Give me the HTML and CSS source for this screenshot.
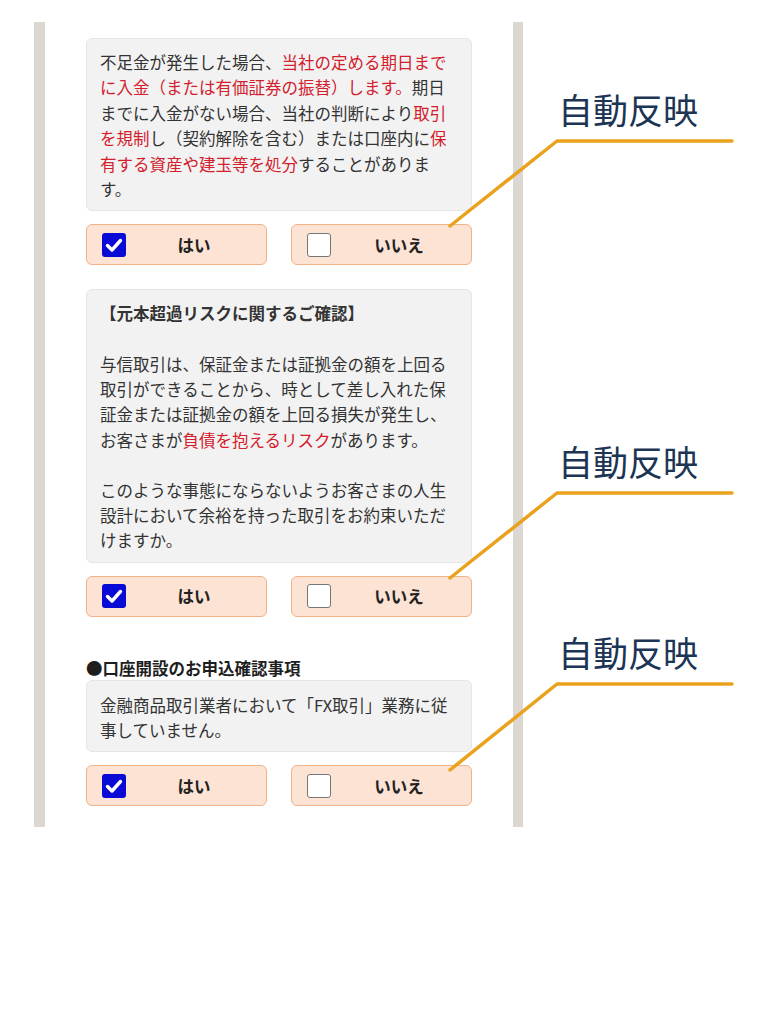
FILE: index.html
```html
<!DOCTYPE html>
<html lang="ja">
<head>
<meta charset="utf-8">
<title>確認事項</title>
<link rel="stylesheet" href="styles.css">
</head>
<body>
<div class="canvas">
  <div class="phone">
    <div class="screen">
      <div class="note">不足金が発生した場合、<span class="red">当社の定める期日までに入金（または有価証券の振替）します。</span>期日までに入金がない場合、当社の判断により<span class="red">取引を規制</span>し（契約解除を含む）または口座内に<span class="red">保有する資産や建玉等を処分</span>することがあります。</div>
      <div class="choices">
        <div class="choice"><span class="box checked"><svg viewBox="0 0 24 24" width="24" height="24"><path d="M5.5 12.5 L10 17 L18.5 7.5" fill="none" stroke="#fff" stroke-width="3.4" stroke-linecap="round" stroke-linejoin="round"/></svg></span><span class="label">はい</span></div>
        <div class="choice"><span class="box"></span><span class="label">いいえ</span></div>
      </div>

      <div class="note second">
        <p class="title">【元本超過リスクに関するご確認】</p>
        <p class="para">与信取引は、保証金または証拠金の額を上回る取引ができることから、時として差し入れた保証金または証拠金の額を上回る損失が発生し、お客さまが<span class="red">負債を抱えるリスク</span>があります。</p>
        <p class="para">このような事態にならないようお客さまの人生設計において余裕を持った取引をお約束いただけますか。</p>
      </div>
      <div class="choices">
        <div class="choice"><span class="box checked"><svg viewBox="0 0 24 24" width="24" height="24"><path d="M5.5 12.5 L10 17 L18.5 7.5" fill="none" stroke="#fff" stroke-width="3.4" stroke-linecap="round" stroke-linejoin="round"/></svg></span><span class="label">はい</span></div>
        <div class="choice"><span class="box"></span><span class="label">いいえ</span></div>
      </div>

      <h3 class="section">●口座開設のお申込確認事項</h3>
      <div class="note third">金融商品取引業者において「FX取引」業務に従事していません。</div>
      <div class="choices last">
        <div class="choice"><span class="box checked"><svg viewBox="0 0 24 24" width="24" height="24"><path d="M5.5 12.5 L10 17 L18.5 7.5" fill="none" stroke="#fff" stroke-width="3.4" stroke-linecap="round" stroke-linejoin="round"/></svg></span><span class="label">はい</span></div>
        <div class="choice"><span class="box"></span><span class="label">いいえ</span></div>
      </div>
    </div>
  </div>

  <svg class="leaders" width="780" height="1024" viewBox="0 0 780 1024">
    <polyline points="450,226 557,141 732,141" fill="none" stroke="#eaa21e" stroke-width="3.5" stroke-linecap="round" stroke-linejoin="round"/>
    <polyline points="450,578 557,493 732,493" fill="none" stroke="#eaa21e" stroke-width="3.5" stroke-linecap="round" stroke-linejoin="round"/>
    <polyline points="450,770 557,684 732,684" fill="none" stroke="#eaa21e" stroke-width="3.5" stroke-linecap="round" stroke-linejoin="round"/>
  </svg>
  <div class="tag tag1">自動反映</div>
  <div class="tag tag2">自動反映</div>
  <div class="tag tag3">自動反映</div>
</div>
</body>
</html>
```

FILE: styles.css
```css
html, body {
  margin: 0;
  padding: 0;
  background: #ffffff;
}
body {
  font-family: "Noto Sans CJK JP", "Noto Sans", sans-serif;
  color: #333333;
}
.canvas {
  position: relative;
  width: 780px;
  height: 1024px;
  overflow: hidden;
}
.phone {
  padding-top: 22px;
  padding-left: 34px;
  width: 489px;
}
.screen {
  border-left: 11px solid #dcd7d1;
  border-right: 10px solid #dcd7d1;
  padding: 16px 41px 21px 41px;
}
.note {
  background: #f2f2f2;
  border: 1px solid #e6e6e6;
  border-radius: 6px;
  padding: 11px 13px 8px 13px;
  font-size: 16.5px;
  line-height: 25.4px;
  color: #333333;
}
.note p {
  margin: 0;
}
.note .title {
  font-weight: bold;
  margin-bottom: 25.3px;
}
.note .para + .para {
  margin-top: 25.3px;
}
.second {
  line-height: 25.2px;
}
.red {
  color: #d3202c;
}
.choices {
  display: grid;
  grid-template-columns: 1fr 1fr;
  column-gap: 24px;
  margin-top: 13px;
  margin-bottom: 24px;
}
.choices.last {
  margin-bottom: 0;
}
.choice {
  display: flex;
  align-items: center;
  height: 39px;
  background: #fde3d3;
  border: 1px solid #f1b287;
  border-radius: 6px;
}
.box {
  flex: none;
  width: 22px;
  height: 22px;
  margin-left: 15px;
  border: 1px solid #777777;
  border-radius: 3px;
  background: #ffffff;
  display: flex;
  align-items: center;
  justify-content: center;
}
.box.checked {
  width: 24px;
  height: 24px;
  border: none;
  background: #0a0ad6;
}
.box svg {
  display: block;
}
.label {
  flex: 1;
  text-align: center;
  font-size: 16.5px;
  font-weight: bold;
  color: #222222;
  padding-right: 4px;
}
.section {
  margin: 39px 0 0 0;
  font-size: 16.5px;
  line-height: 24px;
  font-weight: bold;
  color: #1e1e1e;
}
.third {
  padding-top: 12px;
}
.leaders {
  position: absolute;
  left: 0;
  top: 0;
  pointer-events: none;
}
.tag {
  position: absolute;
  left: 558px;
  font-size: 35px;
  line-height: 40px;
  color: #1d3554;
}
.tag1 { top: 89px; }
.tag2 { top: 441px; }
.tag3 { top: 632px; }
```
